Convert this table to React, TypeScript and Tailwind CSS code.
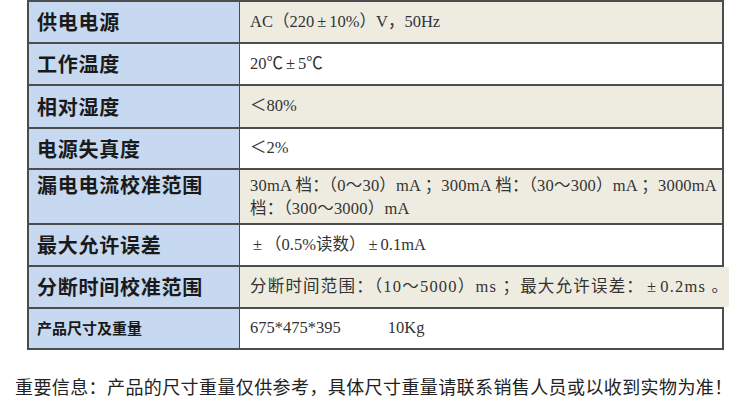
const rows = [
  { label: '供电电源', value: ['AC（220', '10%）V，50Hz'], bg: 'bg-[#eeece1]', h: 'h-[40px]' },
  { label: '工作温度', value: ['20℃', '5℃'], bg: 'bg-white', h: 'h-[42px]' },
  { label: '相对湿度', value: ['＜80%'], bg: 'bg-[#eeece1]', h: 'h-[43px]' },
  { label: '电源失真度', value: ['＜2%'], bg: 'bg-white', h: 'h-[41px]' },
]

const rowsAfter = [
  { label: '最大允许误差', value: ['', '（0.5%读数）', '0.1mA'], bg: 'bg-white', h: 'h-[42px]' },
  {
    label: '分断时间校准范围',
    value: ['分断时间范围：（10～5000）ms ；最大允许误差：', '0.2ms 。'],
    bg: 'bg-[#eeece1]',
    h: 'h-[42px]',
    wide: true,
  },
]

// the ± in the source is a wide glyph, Liberation's is narrow
function WithPm({ parts }: { parts: string[] }) {
  return (
    <>
      {parts.map((p, i) => (
        <span key={i}>
          {i > 0 && <span className="mx-[3px]">±</span>}
          {p}
        </span>
      ))}
    </>
  )
}

type RowProps = { label: string; value: string[]; bg: string; h: string; first?: boolean; wide?: boolean }

function Row({ label, value, bg, h, first, wide }: RowProps) {
  return (
    <div className={`grid grid-cols-[211px_1fr] ${h} ${first ? '' : 'border-t-2 border-[#4d4d4d]'}`}>
      <div className="flex items-center pl-[8px] bg-[#c6d9f0] border-r border-[#4d4d4d] font-['Noto_Sans_CJK_SC',sans-serif] text-[20px] font-bold tracking-[0.75px] text-[#1a1a1a]">
        {label}
      </div>
      <div
        className={`flex items-center pl-[10px] ${bg} ${wide ? 'tracking-[1.2px]' : ''} font-['Liberation_Serif','Noto_Sans_CJK_SC',serif] text-[16.5px] text-[#333] whitespace-pre`}
      >
        <WithPm parts={value} />
      </div>
    </div>
  )
}

export default function App() {
  return (
    <div className="w-[750px] h-[403px] bg-white overflow-hidden">
      <div className="ml-[27px] w-[697px] border-2 border-[#4d4d4d]">
        {rows.map((r, i) => (
          <Row key={r.label} {...r} first={i === 0} />
        ))}
        <div className="grid grid-cols-[211px_1fr] h-[55px] border-t-2 border-[#4d4d4d]">
          <div className="pl-[8px] bg-[#c6d9f0] border-r border-[#4d4d4d] font-['Noto_Sans_CJK_SC',sans-serif] text-[20px] font-bold tracking-[0.75px] text-[#1a1a1a]">
            漏电电流校准范围
          </div>
          <div className="pl-[10px] pt-[4px] bg-[#eeece1] font-['Liberation_Serif','Noto_Sans_CJK_SC',serif] text-[16.5px] leading-[23px] tracking-[0.2px] text-[#333] whitespace-pre">
            30mA 档：（0～30）mA ；300mA 档：（30～300）mA ；3000mA
            <br />
            档：（300～3000）mA
          </div>
        </div>
        {rowsAfter.map((r) => (
          <Row key={r.label} {...r} />
        ))}
        <div className="grid grid-cols-[211px_1fr] h-[41px] border-t-2 border-[#4d4d4d]">
          <div className="flex items-center pl-[8px] bg-[#c6d9f0] border-r border-[#4d4d4d] font-['Noto_Sans_CJK_SC',sans-serif] text-[15px] font-bold text-[#1a1a1a]">
            产品尺寸及重量
          </div>
          <div className="flex items-center pl-[10px] bg-white font-['Liberation_Serif','Noto_Sans_CJK_SC',serif] text-[16.5px] text-[#333]">
            <span>675*475*395</span>
            <span className="ml-[47px]">10Kg</span>
          </div>
        </div>
      </div>
      <p className="mt-[25px] pl-[15px] font-['Liberation_Serif','Noto_Sans_CJK_SC',serif] text-[18px] tracking-[0.4px] text-[#222] whitespace-nowrap">
        重要信息：产品的尺寸重量仅供参考，具体尺寸重量请联系销售人员或以收到实物为准！
      </p>
    </div>
  )
}
